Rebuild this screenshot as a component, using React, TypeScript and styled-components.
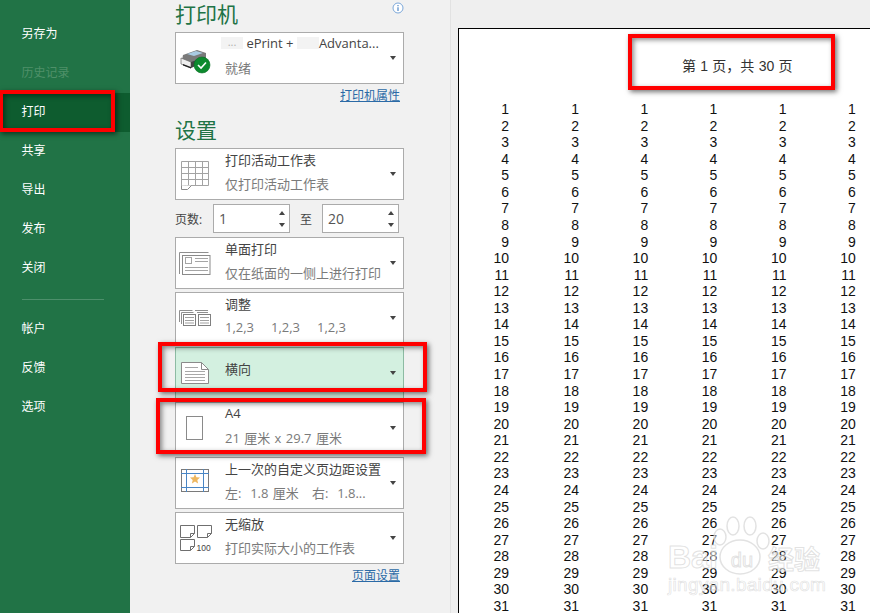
import React from "react";
import styled, { createGlobalStyle } from "styled-components";

const UI_FONT = `"Open Sans", "Noto Sans CJK SC", sans-serif`;

const GlobalStyle = createGlobalStyle`
html, body {
  margin: 0;
  padding: 0;
  background: #f1f1f1;
}
* {
  box-sizing: border-box;
}
`;

const Screen = styled.div`
position: relative;
display: flex;
width: 870px;
height: 613px;
overflow: hidden;
font-family: ${UI_FONT};
`;

const Sidebar = styled.nav`
width: 130px;
flex-shrink: 0;
padding-top: 15px;
background-color: #217346;
`;

const NavItem = styled.div<{ $active?: boolean; $disabled?: boolean }>`
height: 39px;
padding-left: 21.5px;
font-size: 12px;
line-height: 38px;
color: ${(p) => (p.$disabled ? "#4f9069" : "#ffffff")};
background-color: ${(p) => (p.$active ? "#0e5c2f" : "transparent")};
`;

const NavDivider = styled.div`
width: 82px;
height: 1px;
margin: 11px 0 10px 22px;
background-color: #4d8f6b;
`;

const SettingsPanel = styled.section`
width: 320px;
flex-shrink: 0;
padding-left: 45px;
background-color: #f1f1f1;
`;

const Column = styled.div`
width: 229px;
`;

const HeadingRow = styled.div<{ $gap: number; $after: number }>`
display: flex;
justify-content: space-between;
align-items: flex-start;
height: 28px;
margin-top: ${(p) => p.$gap}px;
margin-bottom: ${(p) => p.$after}px;
`;

const Heading = styled.h2`
margin: 0;
font-size: 21px;
font-weight: 400;
line-height: 28px;
color: #217346;
`;

const InfoIcon = styled.svg`
width: 12px;
height: 12px;
margin-top: 2px;
`;

const LinkRow = styled.div`
height: 16px;
margin-top: 4px;
padding-right: 4px;
text-align: right;
font-size: 12px;
line-height: 16px;
`;

const SettingLink = styled.a`
color: #2b6aa6;
text-decoration: underline;
`;

const CardStack = styled.div`
display: flex;
flex-direction: column;
gap: 3px;
`;

const Card = styled.div<{ $selected?: boolean }>`
display: flex;
align-items: stretch;
height: 52px;
border: 1px solid ${(p) => (p.$selected ? "#8dbba3" : "#ababab")};
background-color: ${(p) => (p.$selected ? "#d3f0e0" : "#ffffff")};
`;

const IconSlot = styled.svg`
width: 49px;
height: 50px;
flex-shrink: 0;
`;

const CardText = styled.div`
flex: 1;
min-width: 0;
white-space: pre;
`;

const CardTitle = styled.div<{ $single?: boolean }>`
display: flex;
align-items: center;
height: ${(p) => (p.$single ? 40 : 20)}px;
font-size: 13px;
color: #444444;
`;

const CardSub = styled.div`
display: flex;
align-items: center;
height: 24px;
margin-top: 2px;
font-size: 13px;
word-spacing: 1px;
color: #7a7a7a;
`;

const Caret = styled.span`
align-self: center;
width: 0;
height: 0;
margin-right: 7px;
border-left: 3.5px solid transparent;
border-right: 3.5px solid transparent;
border-top: 4px solid #444444;
`;

const Masked = styled.span`
display: inline-block;
width: 22px;
height: 12px;
background-color: #f3f3f3;
color: #b0b0b0;
font-size: 11px;
line-height: 10px;
text-align: center;
`;

const PrinterName = styled.span`
display: flex;
align-items: center;
margin-left: -4px;
`;

const CollateSample = styled.span`
width: 46px;
`;

const PageRangeRow = styled.div`
display: flex;
align-items: center;
height: 29px;
margin: 4px 0;
font-size: 12px;
color: #444444;
`;

const RangeLabel = styled.span<{ $width: number; $center?: boolean }>`
width: ${(p) => p.$width}px;
text-align: ${(p) => (p.$center ? "center" : "left")};
`;

const Spinner = styled.div`
display: flex;
justify-content: space-between;
align-items: center;
width: 77px;
height: 29px;
padding: 0 4px 0 5px;
border: 1px solid #ababab;
background-color: #ffffff;
font-size: 14px;
color: #555555;
`;

const SpinArrows = styled.div`
display: flex;
flex-direction: column;
gap: 8px;
`;

const SpinArrow = styled.span<{ $up?: boolean }>`
width: 0;
height: 0;
border-left: 3.5px solid transparent;
border-right: 3.5px solid transparent;
border-top: ${(p) => (p.$up ? "0" : "4px solid #444444")};
border-bottom: ${(p) => (p.$up ? "4px solid #444444" : "0")};
`;

const PreviewPane = styled.section`
flex: 1;
min-width: 0;
padding: 28px 0 0 7px;
border-left: 1px solid #e2e2e2;
background-color: #efefef;
`;

const PrintPage = styled.div`
width: 440px;
height: 620px;
border: 1px solid #000000;
background-color: #ffffff;
`;

const PageHeader = styled.div`
display: flex;
align-items: center;
height: 72px;
padding-left: 223px;
font-family: "Liberation Sans", "Noto Sans CJK SC", sans-serif;
font-size: 14px;
word-spacing: 0.4px;
white-space: pre;
color: #333333;
`;

const NumberGrid = styled.div`
display: grid;
grid-template-columns: 50px 70px repeat(4, 69.2px);
grid-auto-rows: 16.57px;
font-family: "Liberation Sans", Arial, sans-serif;
font-size: 14px;
line-height: 16.57px;
color: #111111;
`;

const NumberCell = styled.div`
text-align: right;
`;

const Callout = styled.div<{ $x: number; $y: number; $w: number; $h: number }>`
position: absolute;
left: ${(p) => p.$x}px;
top: ${(p) => p.$y}px;
width: ${(p) => p.$w}px;
height: ${(p) => p.$h}px;
border: 4px solid #ff0000;
box-shadow: 2px 2px 5px rgba(0, 0, 0, 0.55), inset 2px 2px 5px rgba(0, 0, 0, 0.45);
pointer-events: none;
`;

const Watermark = styled.div`
position: absolute;
left: 664px;
top: 515px;
width: 165px;
height: 82px;
pointer-events: none;
`;

const WatermarkPaw = styled.svg`
position: absolute;
left: 46px;
top: 0;
width: 60px;
height: 62px;
`;

const WatermarkBrand = styled.div`
position: absolute;
left: 4px;
top: 24px;
display: flex;
justify-content: space-between;
align-items: center;
width: 152px;
height: 36px;
font-family: "Liberation Sans", sans-serif;
font-size: 32px;
font-weight: 700;
color: rgba(255, 255, 255, 0.5);
-webkit-text-stroke: 1px rgba(210, 210, 210, 0.65);
`;

const WatermarkDu = styled.span`
margin: 6px 2px 0 0;
font-size: 20px;
font-weight: 400;
`;

const WatermarkCn = styled.span`
font-family: "Noto Sans CJK SC", sans-serif;
font-size: 26px;
`;

const WatermarkUrl = styled.div`
position: absolute;
left: 4px;
top: 59px;
font-family: "Liberation Sans", sans-serif;
font-size: 19px;
line-height: 22px;
letter-spacing: 0.3px;
color: rgba(255, 255, 255, 0.4);
-webkit-text-stroke: 0.7px rgba(210, 210, 210, 0.65);
`;

const PrinterIcon = () => (
  <IconSlot viewBox="0 0 49 50">
    <path d="M7 22l14-5 9 3v6l-15 5-9-4z" fill="#7a7a7a" />
    <path d="M11 21l9-3 7 2-9 3z" fill="#a9cbe2" />
    <path d="M5 25l10 4v6L5 31z" fill="#efefef" stroke="#666" strokeWidth="0.7" />
    <path d="M15 29l14-5v5l-14 6z" fill="#444444" />
    <path d="M7 31l8 3v1.500l-8-3z" fill="#222" />
    <circle cx="26" cy="32" r="8" fill="#0d8a2e" stroke="#0a6e25" strokeWidth="0.6" />
    <path d="M22 32l3 3 5-5.500" fill="none" stroke="#fff" strokeWidth="1.600" />
  </IconSlot>
);

const SheetIcon = () => (
  <IconSlot viewBox="0 0 49 50">
    <path
      d="M5.500 12.500h27v24h-22l-5 .5zM5.500 18.500h27M5.500 24.500h27M5.500 30.500h27M12.500 12.500v24M19.500 12.500v24M26.500 12.500v24"
      fill="none"
      stroke="#a3a3a3"
    />
    <path d="M5.500 36.500v4h6l4-4" fill="#fff" stroke="#8a8a8a" />
  </IconSlot>
);

const SingleSidedIcon = () => (
  <IconSlot viewBox="0 0 49 50">
    <path d="M3.500 36V14.500h29" fill="none" stroke="#8f8f8f" />
    <rect x="6.500" y="17.500" width="27.500" height="19" fill="#fff" stroke="#8a8a8a" />
    <rect x="9.500" y="19.500" width="6" height="6" fill="none" stroke="#a5a5a5" />
    <path d="M19 20.500h13M19 23.500h13M9 29.500h23M9 32.500h23" stroke="#a5a5a5" />
  </IconSlot>
);

const CollateIcon = () => (
  <IconSlot viewBox="0 0 49 50">
    <path
      d="M3.500 29V17.500h13M5.500 31V19.500h12M19 17.500h13M21 19.500h11"
      fill="none"
      stroke="#8f8f8f"
    />
    <rect x="7.500" y="21.500" width="12" height="11" fill="#fff" stroke="#808080" />
    <rect x="22.500" y="21.500" width="12" height="11" fill="#fff" stroke="#808080" />
    <path d="M9 24.500h9M9 27.500h9M9 30h9M24 24.500h9M24 27.500h9M24 30h9" stroke="#a0a0a0" />
  </IconSlot>
);

const LandscapeIcon = () => (
  <IconSlot viewBox="0 0 49 50">
    <path d="M5.500 14.500h20l7 7v14h-27z" fill="#fff" stroke="#8a8a8a" />
    <path d="M25.500 14.500v7h7" fill="none" stroke="#8a8a8a" />
    <path d="M9 19.500h13M9 23.500h20M9 26.500h20M9 29.500h20M9 32.500h20" stroke="#a8a8a8" />
  </IconSlot>
);

const PaperIcon = () => (
  <IconSlot viewBox="0 0 49 50">
    <rect x="10.500" y="13.500" width="16" height="23" fill="#fff" stroke="#8a8a8a" />
  </IconSlot>
);

const MarginsIcon = () => (
  <IconSlot viewBox="0 0 49 50">
    <rect x="5.500" y="11.500" width="27" height="22" fill="#fff" stroke="#7a7a7a" />
    <path d="M5 15.500h28M5 29.500h28M10.500 11v23M27.500 11v23" stroke="#4a86c5" strokeWidth="1" />
    <path d="M19 16l1.400 3.300 3.600.3-2.700 2.300.8 3.500-3.100-1.900-3.100 1.900.8-3.500-2.700-2.300 3.600-.3z" fill="#eeb75f" />
  </IconSlot>
);

const NoteShape = ({ x, y, h }: { x: number; y: number; h: number }) => (
  <g fill="#fff" stroke="#6f6f6f" transform={`translate(${x} ${y})`}>
    <path d={`M.5 .5h14v${h - 4}l-4 4h-10z`} />
    <path d={`M10.500 ${h + 0.5}v-4h4`} fill="none" />
  </g>
);

const NoScaleIcon = () => (
  <IconSlot viewBox="0 0 49 50">
    <NoteShape x={4} y={12} h={12} />
    <NoteShape x={21} y={12} h={12} />
    <NoteShape x={4} y={26} h={11} />
    <text x="20.500" y="37.500" fontFamily="Liberation Sans, sans-serif" fontSize="8.500" fill="#444">
      100
    </text>
  </IconSlot>
);

type SettingCard = {
  icon: React.ReactNode;
  title: string;
  sub?: React.ReactNode;
  selected?: boolean;
};

const sheetCard: SettingCard = { icon: <SheetIcon />, title: "打印活动工作表", sub: "仅打印活动工作表" };

const settings: SettingCard[] = [
  { icon: <SingleSidedIcon />, title: "单面打印", sub: "仅在纸面的一侧上进行打印" },
  {
    icon: <CollateIcon />,
    title: "调整",
    sub: (
      <>
        <CollateSample>1,2,3</CollateSample>
        <CollateSample>1,2,3</CollateSample>
        <CollateSample>1,2,3</CollateSample>
      </>
    ),
  },
  { icon: <LandscapeIcon />, title: "横向", selected: true },
  { icon: <PaperIcon />, title: "A4", sub: "21 厘米 x 29.7 厘米" },
  { icon: <MarginsIcon />, title: "上一次的自定义页边距设置", sub: "左:  1.8 厘米   右:  1.8..." },
  { icon: <NoScaleIcon />, title: "无缩放", sub: "打印实际大小的工作表" },
];

const navTop = ["另存为", "历史记录", "打印", "共享", "导出", "发布", "关闭"];
const navBottom = ["帐户", "反馈", "选项"];
const rows = Array.from({ length: 31 }, (_, i) => i + 1);
const columns = [0, 1, 2, 3, 4, 5];

function SpinBox({ value }: { value: string }) {
  return (
    <Spinner>
      <span>{value}</span>
      <SpinArrows>
        <SpinArrow $up />
        <SpinArrow />
      </SpinArrows>
    </Spinner>
  );
}

function SettingRow({ card }: { card: SettingCard }) {
  return (
    <Card $selected={card.selected}>
      {card.icon}
      <CardText>
        <CardTitle $single={!card.sub}>{card.title}</CardTitle>
        {card.sub && <CardSub>{card.sub}</CardSub>}
      </CardText>
      <Caret />
    </Card>
  );
}

export default function App() {
  return (
    <Screen>
      <GlobalStyle />
      <Sidebar>
        {navTop.map((label) => (
          <NavItem key={label} $active={label === "打印"} $disabled={label === "历史记录"}>
            {label}
          </NavItem>
        ))}
        <NavDivider />
        {navBottom.map((label) => (
          <NavItem key={label}>{label}</NavItem>
        ))}
      </Sidebar>

      <SettingsPanel>
        <Column>
          <HeadingRow $gap={0} $after={4}>
            <Heading>打印机</Heading>
            <InfoIcon viewBox="0 0 12 12">
              <circle cx="6" cy="6" r="5" fill="#fff" stroke="#7ba7d9" />
              <path d="M6 3v1.300M6 5.300v3.700" stroke="#4f86c6" strokeWidth="1.200" />
            </InfoIcon>
          </HeadingRow>
          <Card>
            <PrinterIcon />
            <CardText>
              <CardTitle>
                <PrinterName>
                  <Masked>...</Masked>
                  {" ePrint + "}
                  <Masked />
                  Advanta...
                </PrinterName>
              </CardTitle>
              <CardSub>就绪</CardSub>
            </CardText>
            <Caret />
          </Card>
          <LinkRow>
            <SettingLink>打印机属性</SettingLink>
          </LinkRow>

          <HeadingRow $gap={12} $after={4}>
            <Heading>设置</Heading>
          </HeadingRow>
          <SettingRow card={sheetCard} />
          <PageRangeRow>
            <RangeLabel $width={38}>页数:</RangeLabel>
            <SpinBox value="1" />
            <RangeLabel $width={32} $center>
              至
            </RangeLabel>
            <SpinBox value="20" />
          </PageRangeRow>
          <CardStack>
            {settings.map((card) => (
              <SettingRow key={card.title} card={card} />
            ))}
          </CardStack>
          <LinkRow>
            <SettingLink>页面设置</SettingLink>
          </LinkRow>
        </Column>
      </SettingsPanel>

      <PreviewPane>
        <PrintPage>
          <PageHeader>第 1 页，共 30 页</PageHeader>
          <NumberGrid>
            {rows.map((row) =>
              columns.map((col) => <NumberCell key={`${row}-${col}`}>{row}</NumberCell>)
            )}
          </NumberGrid>
        </PrintPage>
      </PreviewPane>

      <Callout $x={-1} $y={90} $w={116} $h={42} />
      <Callout $x={158} $y={342} $w={269} $h={50} />
      <Callout $x={156} $y={398} $w={270} $h={56} />
      <Callout $x={628} $y={34} $w={207} $h={56} />

      <Watermark>
        <WatermarkPaw viewBox="0 0 60 62">
          <g fill="rgba(255,255,255,0.5)" stroke="rgba(210,210,210,0.65)" strokeWidth="1.500">
            <ellipse cx="10" cy="22" rx="6" ry="8" />
            <ellipse cx="23" cy="11" rx="6" ry="9" />
            <ellipse cx="40" cy="11" rx="6" ry="9" />
            <ellipse cx="53" cy="26" rx="6" ry="8" />
            <ellipse cx="30" cy="42" rx="20" ry="17" />
          </g>
        </WatermarkPaw>
        <WatermarkBrand>
          <span>Bai</span>
          <WatermarkDu>du</WatermarkDu>
          <WatermarkCn>经验</WatermarkCn>
        </WatermarkBrand>
        <WatermarkUrl>jingyan.baidu.com</WatermarkUrl>
      </Watermark>
    </Screen>
  );
}
